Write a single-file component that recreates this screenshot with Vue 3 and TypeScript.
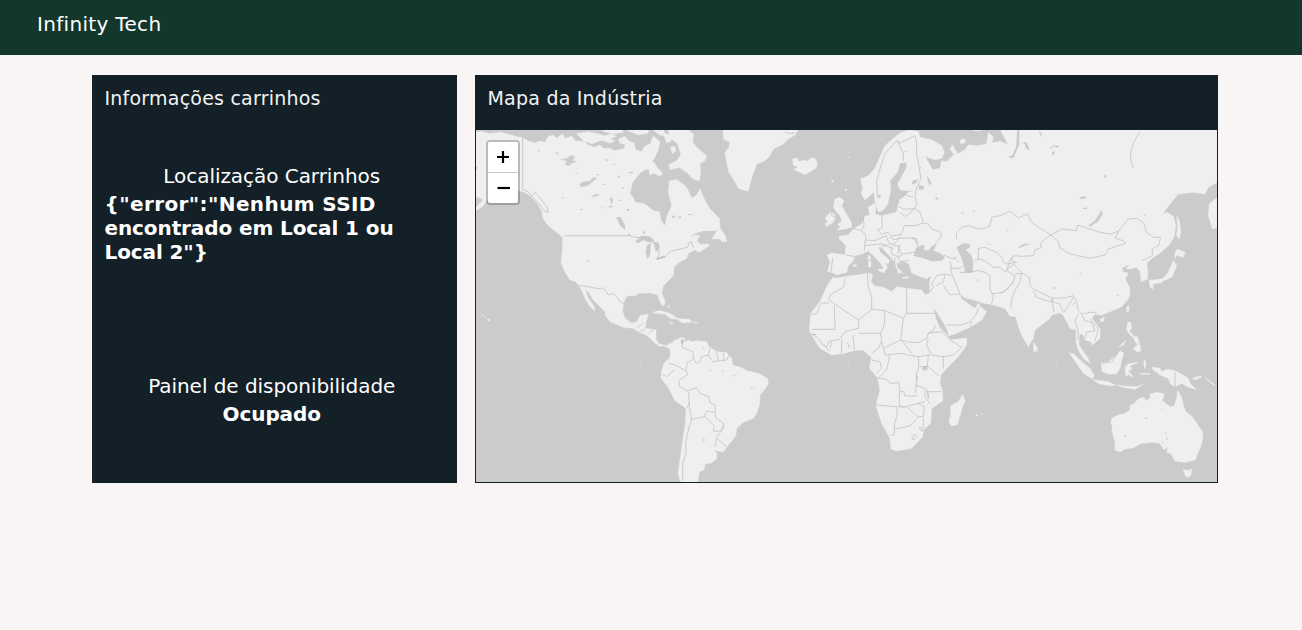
<script setup lang="ts">
import { ref } from 'vue'

interface Layer {
  origin: string
  land: string[]
  water: string[]
  borders: string[]
}

const location = ref('{"error":"Nenhum SSID encontrado em Local 1 ou Local 2"}')
const availability = ref('Ocupado')

const layers: Layer[] = [
  {
    // North America
    origin: 'translate(475 129) scale(.33333)',
    land: [
      'M0 10L20 8 45 14 75 10 110 18 128 25 140 24 160 36 180 42 195 36 210 40 218 24 235 18 245 28 262 15 270 28 290 22 300 35 330 38 338 48 360 55 375 48 385 58 405 58 420 65 445 60 452 47 435 42 430 30 450 22 460 35 478 42 482 62 500 68 510 50 525 46 535 20 555 38 550 60 540 85 525 105 530 125 515 120 497 130 485 145 472 162 465 195 475 205 480 220 510 225 535 245 553 248 558 275 570 290 576 260 590 230 580 190 583 155 605 152 630 170 640 185 650 208 663 200 675 180 690 215 705 240 733 268 735 290 725 305 685 305 660 313 644 325 665 318 675 320 665 335 677 346 700 345 703 350 672 370 660 362 640 372 635 388 612 400 597 415 595 440 565 470 560 493 571 518 567 530 560 527 553 513 549 498 525 491 490 493 482 500 455 501 445 523 443 548 450 568 470 583 487 578 495 560 520 556 513 578 510 598 543 603 543 631 553 645 575 650 588 640 585 660 565 650 550 653 530 633 515 618 495 611 475 598 445 595 405 578 390 558 392 550 375 533 355 513 340 488 330 480 340 508 358 533 360 545 345 533 330 508 315 473 300 457 285 453 270 430 258 400 263 360 262 325 245 310 220 290 205 270 200 245 185 220 170 205 150 190 132 185 80 200 40 210 20 235 0 245 0 238 25 212 0 200Z',
      'M305 14L340 8 365 14 390 20 410 14 425 22 405 30 420 35 405 42 380 34 350 44 325 35Z',
      'M375 0L440 0 445 10 415 14 390 9ZM455 3L520 0 520 12 490 18ZM530 0L565 0 570 20 555 18ZM520 95L535 98 550 120 563 132 555 142 535 132 525 138Z',
      'M580 3L640 3 655 15 653 40 670 60 695 80 690 95 675 103 677 130 673 155 655 150 635 130 612 115 585 122 582 107 605 95 618 77 608 45 585 25Z',
      'M565 12L583 18 590 35 575 42ZM586 55L600 52 602 67 592 74Z',
      'M710 330L735 293 738 303 750 318 755 339 740 337 735 329Z',
      'M535 552L548 546 570 550 595 563 610 571 588 569 570 555ZM610 574L640 570 652 578 625 582ZM582 581L596 581 588 584ZM655 580L668 580 664 583Z',
      'M39 569l6 4-3 4-4-4ZM20 558h3v2h-3ZM30 563h3v2h-3Z',
    ],
    water: [
      'M255 92L275 88 290 78 300 84 293 94 307 98 290 103 280 112 270 105 277 96ZM313 166L325 158 345 155 355 145 366 148 352 158 338 170 318 174ZM350 205L361 195 376 197 360 203ZM424 265L437 263 450 290 450 302 435 290ZM480 338L500 320 525 322 540 337 520 340 505 334 490 343ZM515 350L528 340 525 380 517 390 512 370ZM535 338L550 340 555 355 543 370ZM543 388L565 380 575 385 548 392Z',
      'M337 390L343 397 345 402 338 396ZM403 207L415 215 410 225ZM365 135h7v4h-7ZM385 165h6v3h-6ZM260 205h7v3h-7ZM315 240h9v3h-9ZM428 140h6v6h-6ZM440 176h7v4h-7ZM455 240h7v5h-7ZM0 110l8 5-8 18ZM590 262l9-3 2 4-9 4ZM640 255h12v3h-12ZM610 262h8v5h-8Z',
      'M188 65l7-3 2 3-8 3ZM240 70l12 2-2 3-10-2ZM300 132h8v2h-8ZM392 90l8 3-1 3-8-3ZM408 205l6 3-2 7-5-4ZM400 232l10-3 4 5-9 2ZM380 235h5v3h-5ZM415 105h6v3h-6ZM462 128l12 2v3h-12ZM432 212h6v4h-6ZM505 305l6 5-2 5-6-4ZM460 312l6 5-3 5-4-4ZM590 340h4v2h-4Z',
    ],
    borders: [
      'M143 25V181L158 187 170 202 181 190 195 207 218 236 219 251 205 244 190 222 173 205M268 320H460L482 325 515 327 532 340 550 355 553 375 545 391 570 382 586 367 620 359 638 355 643 340 650 338 655 357M313 469L344 474 375 480 385 476 400 497 415 493 428 506 434 517 447 524M487 596L505 582M493 608L510 600M520 616L535 602M546 645L552 655',
    ],
  },
  {
    // Greenland, Iceland and the British Isles
    origin: 'translate(660 129) scale(.33333)',
    land: [
      'M190 0H415L405 18 385 30 370 45 340 60 330 80 318 92 305 100 290 104 285 120 277 140 270 165 265 187 250 183 235 177 225 158 207 130 200 100 195 70 207 55 210 40 190 30Z',
      'M398 90L412 87 415 98 432 94 445 96 452 87 465 88 472 102 468 117 450 128 435 137 412 127 402 121 415 115 400 108Z',
      'M525 210L540 205 552 216 545 230 555 248 565 265 574 280 575 295 555 300 530 304 542 294 532 286 545 278 541 261 530 250 520 235ZM500 260L515 248 526 260 520 280 500 292 495 284 505 278 496 270Z',
    ],
    water: ['M372 8l22 4 12-3-6 6-20-2Z'],
    borders: ['M515 248V260L525 263'],
  },
  {
    // South America
    origin: 'translate(560 280) scale(.33333)',
    land: [
      'M328 200L342 182 366 172 376 177 370 188 385 180 395 185 410 182 440 185 447 200 470 215 500 218 515 235 518 255 542 262 560 272 595 280 622 295 625 310 617 325 600 345 598 375 590 400 580 415 550 427 530 445 527 468 505 495 490 515 468 512 460 505 470 520 470 535 455 548 435 552 432 570 418 575 413 606H362L354 580 360 540 370 470 376 430 378 385 345 362 325 322 303 295 305 275 312 250 328 235 332 220Z',
      'M280 97L300 92 325 98 350 112 335 110 310 99ZM350 115L380 118 392 125 365 127Z',
      'M240 256h2v2h-2ZM325 77h3v7h-3Z',
    ],
    water: [
      'M363 180l5-4 5 8-5 9-5-4ZM428 478h7v4h-7Z',
      'M445 273l10-5v2l-9 5ZM484 273l8-3v2l-7 3ZM520 285l6 2-1 2-6-1ZM570 324l15-4v2l-14 4ZM428 204l6 1-1 3-5-1Z',
    ],
    borders: [
      'M365 180L368 203 398 215 402 238 408 250 420 245 425 230 445 225M450 205L445 225 458 245 475 243M470 218L475 243 500 240 508 222M490 219L492 242M400 238L382 247 378 272 345 255 325 250M307 283L320 290 345 268M380 272L382 285 358 300 357 318 380 333 410 323 420 340 447 350 450 368 465 375 466 398 440 393 433 410 395 418 388 380 386 335M465 400L468 415 490 430 490 445 470 472 465 500M435 410L463 437 460 453 482 453 490 435M470 475L500 500M395 418L385 450 377 490 378 520 368 550 368 603M380 385L388 370',
    ],
  },
  {
    // Europe and Asia
    origin: 'translate(800 129) scale(.33333)',
    land: [
      'M182 150L205 140 225 118 238 88 255 50 278 30 300 12 325 3 355 8 360 25 395 32 425 50 433 70 425 88 405 92 375 82 388 105 397 122 420 118 425 95 440 98 462 77 450 60 458 48 473 75 495 62 505 48 530 50 560 45 565 10 580 25 575 42 600 37 625 48 610 20 600 0H1252V160L1225 175 1215 195 1180 190 1135 195 1110 225 1087 255 1100 250 1120 262 1127 290 1122 325 1105 350 1080 372 1060 385 1040 402 1043 420 1043 450 1024 458 1020 428 1010 415 990 420 978 420 990 405 965 418 970 430 985 432 976 450 988 475 990 495 985 510 965 533 930 548 905 558 885 555 875 568 900 600 900 628 878 648 872 638 855 633 850 618 838 613 837 648 850 668 862 683 870 703 850 688 835 663 828 638 828 603 810 598 800 578 790 558 780 551 755 558 750 568 705 603 700 628 685 653 665 618 652 583 648 563 630 561 615 538 580 528 545 521 530 515 495 507 478 491 485 510 510 528 525 538 535 523 542 534 560 548 545 573 510 595 470 613 447 620 440 598 410 548 385 513 375 498 385 495 390 490 388 462 393 442 365 445 335 432 328 405 310 397 290 402 292 417 307 430 295 433 285 400 270 382 247 357 235 351 240 370 268 393 265 405 255 400 262 415 255 425 240 400 215 375 205 365 185 375 165 380 160 395 145 410 140 430 110 438 100 432 83 428 90 400 82 378 95 372 135 378 138 350 118 330 117 322 145 318 160 300 185 285 195 262 210 258 205 235 225 222 228 240 225 255 245 260 290 250 295 225 310 205 325 190 345 185 315 185 300 182 293 165 310 135 320 115 320 100 300 102 292 130 270 155 272 185 263 225 248 245 235 248 225 215 222 190 195 212 183 195 188 180Z',
      'M298 212L308 208 310 220 300 224ZM205 397h8v17h-8ZM205 380h6v12h-6ZM238 420L258 420 252 432 235 425ZM308 444h18v4h-18ZM370 446l17-4-7 8ZM480 34l12-5 5 10-14 7ZM146 84h2v2h-2ZM95 154h5v4h-5ZM135 180h4v5h-4ZM160 407h9v5h-9ZM520 0l25 5-25 0Z',
      'M1130 260L1138 275 1142 310 1138 330 1130 320 1133 290ZM1133 360L1155 370 1150 385 1130 378 1125 390 1125 370ZM1120 395L1130 410 1120 435 1115 445 1090 455 1070 458 1055 465 1052 475 1060 480 1048 460 1070 452 1090 448 1105 430ZM1252 205V295L1238 300 1225 260 1228 225Z',
    ],
    water: [
      'M340 380L350 358 365 347 375 350 370 362 385 365 395 352 410 345 400 365 420 372 435 385 425 395 395 397 370 388Z',
      'M470 355L490 343 510 345 510 355 497 362 515 380 520 400 518 432 495 430 490 405 483 385Z',
      'M652 3H658V45L652 60 640 88 624 84 638 77 648 55ZM665 42L680 40 690 65 678 58 675 46ZM355 167L370 170 372 180 358 183ZM382 140L395 162 390 170 383 155ZM865 289L885 275 905 242 908 255 895 277 870 293ZM406 203l9 3-2 7-6-3ZM337 155l17-5-5 13-13 3ZM232 200l12-4-6 14Z',
      'M655 353l18-9 25 1-20 3-20 9ZM912 138l8 2-3 8-4-4ZM1030 256l8 1-5 4ZM838 432l7 2-5 3ZM564 344l9 1-8 2ZM532 448l4 6-4 5ZM485 250h5v4h-5ZM517 245h8v3h-8ZM620 302h6v3h-6Z',
      'M750 55l15-8 1 2-14 10ZM765 52l10-3 2 6-10 1ZM756 70l10-4-2 6-8 8ZM838 205l18-4 2 8-18 0ZM848 238l14-3-2 5-9 0ZM716 7l7 2 2 14-3-2ZM315 65h5v4h-5ZM360 110l5 8-4 2Z',
    ],
    borders: [
      'M233 205L230 155 243 110 255 75 285 40 292 35 310 75 310 95M290 35L300 42 325 30 345 20 350 40 350 75 355 100 363 150 350 175 345 200 350 225 343 240 325 240 310 240 295 232M308 195L340 205M300 250L313 262 328 255 342 238 360 250 370 282 345 290 313 290 307 310 298 318M245 258L247 295 233 303 245 315 265 310 275 322 290 318 305 318M190 262L192 290 185 305 198 318 195 340 193 365M160 298L185 305M198 333L225 335 258 320M195 350L240 345 265 350M258 320L268 345 283 345 300 325M268 325L285 332 300 327M300 327L320 327 345 330 353 350 345 370 305 375 293 350 280 350M335 325L350 330 353 347M370 282L385 285 395 300 423 310 423 325 405 345M275 352L275 375 290 382 305 380M245 352L260 350 280 360M285 385L283 402M293 380L300 398 327 395M137 378L165 383M98 387L93 430M430 378L460 390 470 382M450 395L455 418 480 418 490 410M460 385L478 400M450 415L458 440 435 435 410 440 395 465 400 475 388 490M435 436L430 460 408 470M458 440L468 465 480 495 450 497 430 470M480 430L505 430 535 425 555 430 570 440 570 480 580 500 575 525M469 330L470 310 485 295 505 290 535 300 555 297 570 290 575 265 600 260 630 247 655 267 683 255 695 280 720 298 753 318 735 330 720 345 725 355 705 363 700 380 665 382 645 380 630 392 650 400 620 405 610 400 605 385 590 370 555 355 535 358 535 390 525 395M535 390L555 395 580 415 600 415 615 428 640 405 650 415 665 430M640 380L630 395 620 425 645 440 640 460 610 490 575 495M645 435L665 432 688 445 690 470 700 480 720 490 755 507 795 507 820 500 830 515 815 530M665 433L660 458 645 485 635 510 633 538M700 485L710 505 740 515 758 518 758 508M753 318L785 300 830 305 833 288 860 297 900 310 930 315 955 307 985 270 1010 268 1030 280 1040 310 1060 325 1082 325 1075 350 1057 360 1057 380 1025 395M753 318L775 337 780 357 810 375 870 388 915 378 925 360 977 343 970 335 945 328 955 307M300 345L293 375',
      'M755 510L762 550M760 520L780 525 790 550M820 505L805 530 792 550M830 520L835 545 845 555 870 550 890 550M835 555L825 575 833 600 835 633M845 557L855 575 875 580 885 605 860 610 855 630M870 570L895 600 885 635M440 588L485 588 510 578 530 555 535 535M515 578L510 595',
      'M1020 8Q975 70 1000 117',
    ],
  },
  {
    // Africa
    origin: 'translate(790 270) scale(.33333)',
    land: [
      'M135 25L165 20 235 10 248 12 243 35 255 48 280 52 305 65 320 50 350 55 395 60 410 82 430 110 437 145 450 175 470 193 480 210 530 204 530 225 505 260 480 285 452 315 450 340 458 365 458 393 425 415 422 460 400 480 398 500 365 535 320 543 303 537 300 505 275 460 258 407 270 360 262 322 238 295 245 260 235 255 220 240 190 242 165 250 125 255 90 235 65 195 58 180 62 130 90 95 110 50 130 20Z',
      'M518 373L525 392 518 410 502 464 484 468 477 455 482 435 482 408 505 395Z',
      'M174 286h2v2h-2ZM557 435h7v2h-7ZM574 429h2v3h-2Z',
    ],
    water: ['M397 290L412 287 412 300 398 302ZM380 310l4 12-2 10-4-10ZM409 350l7 20 2 20-6-10ZM65 192h15v3h-15ZM173 215l6 15-3 4-4-14Z'],
    borders: [
      'M165 25L162 50 120 75 117 90 205 150 245 118 245 80 235 50 232 10M245 118L285 122 340 145 350 130V55M350 130H433M133 105L135 178 65 178M62 132H80L92 100 117 98M205 150L207 175 165 185 148 208 118 213 110 230 100 225 85 205 65 190M207 190L272 190 275 215 265 235 245 250M285 122L283 165 272 190M340 145L335 185 332 210 350 215 385 218 410 205 415 190 430 182 437 165M332 210L280 235 275 215M415 205L410 225 425 255 460 260 490 255 515 232 480 210M280 235L285 255 335 250 355 255 385 260 420 255M335 210L365 250M300 252L290 300 265 325M245 270L270 275 275 295 260 310M385 260L387 290 380 310 380 345 375 370M388 290H415L447 317M460 258V295M415 255L412 290M262 325L290 328 300 340 327 338 330 365 342 365 345 378 382 378M328 365L328 405 345 412 258 405M345 410L385 400 405 395M322 412L320 440 313 465V495L300 495M313 477L340 472 360 467 385 442 350 410M385 440L400 440 403 410 385 400M400 445L400 475M375 345L405 355 405 380 420 402M415 365H455M388 472Q400 473 399 481Q390 485 388 472M365 500L375 493 380 500 370 510ZM155 210V250M190 205L193 240M195 193L185 205M125 215L120 235M100 225L120 245M415 190L455 185 478 205',
    ],
  },
  {
    // Southeast Asia and Australia
    origin: 'translate(1000 280) scale(.33333)',
    land: [
      'M335 415L350 407 375 400 390 390 390 378 405 368 415 357 432 352 438 362 450 355 450 342 470 337 493 342 487 362 510 380 523 378 530 355 533 332 545 352 550 375 557 395 577 410 590 430 608 455 608 480 600 505 585 540 555 547 525 543 512 520 500 517 503 500 492 510 480 490 455 487 425 490 400 503 375 507 360 516 345 510 345 485 335 450 338 442 333 430Z',
      'M550 568L562 572 575 567 573 585 563 593 556 588Z',
      'M207 218L222 222 245 245 270 265 282 285 278 297 250 280 230 250ZM280 300L305 302 325 305 345 315 335 318 300 312ZM350 315L370 318 410 320 430 313 405 328 370 322ZM303 250L325 245 345 230 360 212 372 220 365 240 360 265 350 282 325 282 307 275Z',
      'M375 262L385 252 413 247 390 258 395 268 385 272 400 292 385 283 378 290ZM455 262L480 265 485 275 500 268 525 272 545 283 565 295 570 310 588 328 565 322 545 310 525 320 510 310 505 295 480 285 460 270ZM383 127L393 127 395 145 388 155 400 165 395 170 380 150ZM398 168L412 170 418 190 408 190ZM400 205L418 190 423 213 412 216ZM358 200L378 180 370 195ZM578 295L600 287 605 290 585 300ZM615 292L645 315 640 315ZM433 238l5 12-3 17-4-15ZM420 280h30v3h-30ZM100 187L113 203 111 214 101 214ZM380 82L388 77 385 97 380 95ZM300 118L313 112 312 123 303 125ZM448 0L490 0 485 8 460 12 458 25 450 20ZM168 255h2v2h-2Z',
    ],
    water: ['M435 413h7v4h-7ZM373 466h4v5h-4ZM495 458h4v4h-4ZM498 475h4v5h-4ZM485 486h8v2h-8ZM484 387h5v2h-5ZM350 44h5v4h-5ZM160 22h6v4h-6Z'],
    borders: ['M525 275V322M308 250L335 245 350 225 355 218', 'M0 40L20 30 40 5'],
  },
]
</script>

<template>
  <div class="page">
    <header class="topbar">Infinity Tech</header>
    <main class="content">
      <section class="card info">
        <h2 class="card-title carts-title">Informações carrinhos</h2>
        <div class="block place">
          <p class="label place-label">Localização Carrinhos</p>
          <p class="value place-value">{{ location }}</p>
        </div>
        <div class="block state">
          <p class="label state-label">Painel de disponibilidade</p>
          <p class="value state-value">{{ availability }}</p>
        </div>
      </section>
      <section class="card industry">
        <h2 class="card-title map-title">Mapa da Indústria</h2>
        <div class="map">
          <svg class="world" viewBox="476 130 741 352" width="741" height="352">
            <g v-for="layer in layers" :key="layer.origin" :transform="layer.origin">
              <path v-for="d in layer.land" :key="d" class="land" :d="d" />
              <path v-for="d in layer.water" :key="d" class="water" :d="d" />
              <path v-for="d in layer.borders" :key="d" class="border" :d="d" />
            </g>
          </svg>
          <div class="zoom">
            <button class="zoom-btn" type="button" aria-label="Zoom in">
              <svg width="30" height="30" viewBox="0 0 30 30"><path d="M9 15H21M15 9V21" /></svg>
            </button>
            <button class="zoom-btn" type="button" aria-label="Zoom out">
              <svg width="30" height="30" viewBox="0 0 30 30"><path d="M9.5 15H22" /></svg>
            </button>
          </div>
        </div>
      </section>
    </main>
  </div>
</template>

<style>
body {
  background: #f9f5f4;
}
</style>

<style scoped>
.page {
  min-height: 630px;
  background: #f9f5f4;
  color: #fff;
  font: 20px/24px Verdana, "DejaVu Sans", sans-serif;
}
.topbar {
  box-sizing: border-box;
  height: 55px;
  padding: 12px 37px;
  background: #14372b;
  letter-spacing: 0.32px;
}
.content {
  display: flex;
  gap: 18px;
  padding: 20px 84px 0 92px;
}
.card {
  box-sizing: border-box;
  height: 408px;
  background: #142027;
}
.info {
  width: 365px;
  padding: 11px 18px 0 12.5px;
}
.industry {
  width: 743px;
  padding: 0 1px 1px;
}
.card-title {
  margin: 0;
  font-size: 19px;
  font-weight: 400;
  line-height: 24px;
  letter-spacing: 0.22px;
  color: #f1f3f3;
}
.map-title {
  height: 55px;
  box-sizing: border-box;
  padding: 11px 11.5px 0;
}
.place {
  height: 210px;
  padding-top: 54px;
  box-sizing: border-box;
}
.state {
  padding-top: 54px;
}
.label,
.value {
  margin: 0;
}
.label {
  text-align: center;
  margin-bottom: 4px;
  letter-spacing: -0.05px;
}
.value {
  font-weight: 700;
  letter-spacing: -0.1px;
}
.place-value {
  padding-right: 20px;
}
.place-value::first-line {
  letter-spacing: 0.39px;
}
.state-value {
  text-align: center;
}
.map {
  position: relative;
  height: 352px;
  background: #cbcbcb;
  overflow: hidden;
}
.world {
  display: block;
}
.land {
  fill: #efefef;
  stroke: #efefef;
  stroke-width: 1.4;
  stroke-linejoin: round;
}
.water {
  fill: #cbcbcb;
}
.border {
  fill: none;
  stroke: #bcbcbc;
  stroke-width: 2.1;
  stroke-linejoin: round;
}
.zoom {
  position: absolute;
  top: 10px;
  left: 10px;
  border: 2px solid rgba(0, 0, 0, 0.22);
  border-radius: 4px;
  background-clip: padding-box;
}
.zoom-btn {
  display: block;
  width: 30px;
  height: 30px;
  padding: 0;
  border: 0;
  background: #fff;
  border-radius: 0 0 2px 2px;
}
.zoom-btn:first-child {
  height: 31px;
  border-bottom: 1px solid #ccc;
  border-radius: 2px 2px 0 0;
}
.zoom-btn svg {
  display: block;
}
.zoom-btn path {
  stroke: #000;
  stroke-width: 2.2;
}
</style>
